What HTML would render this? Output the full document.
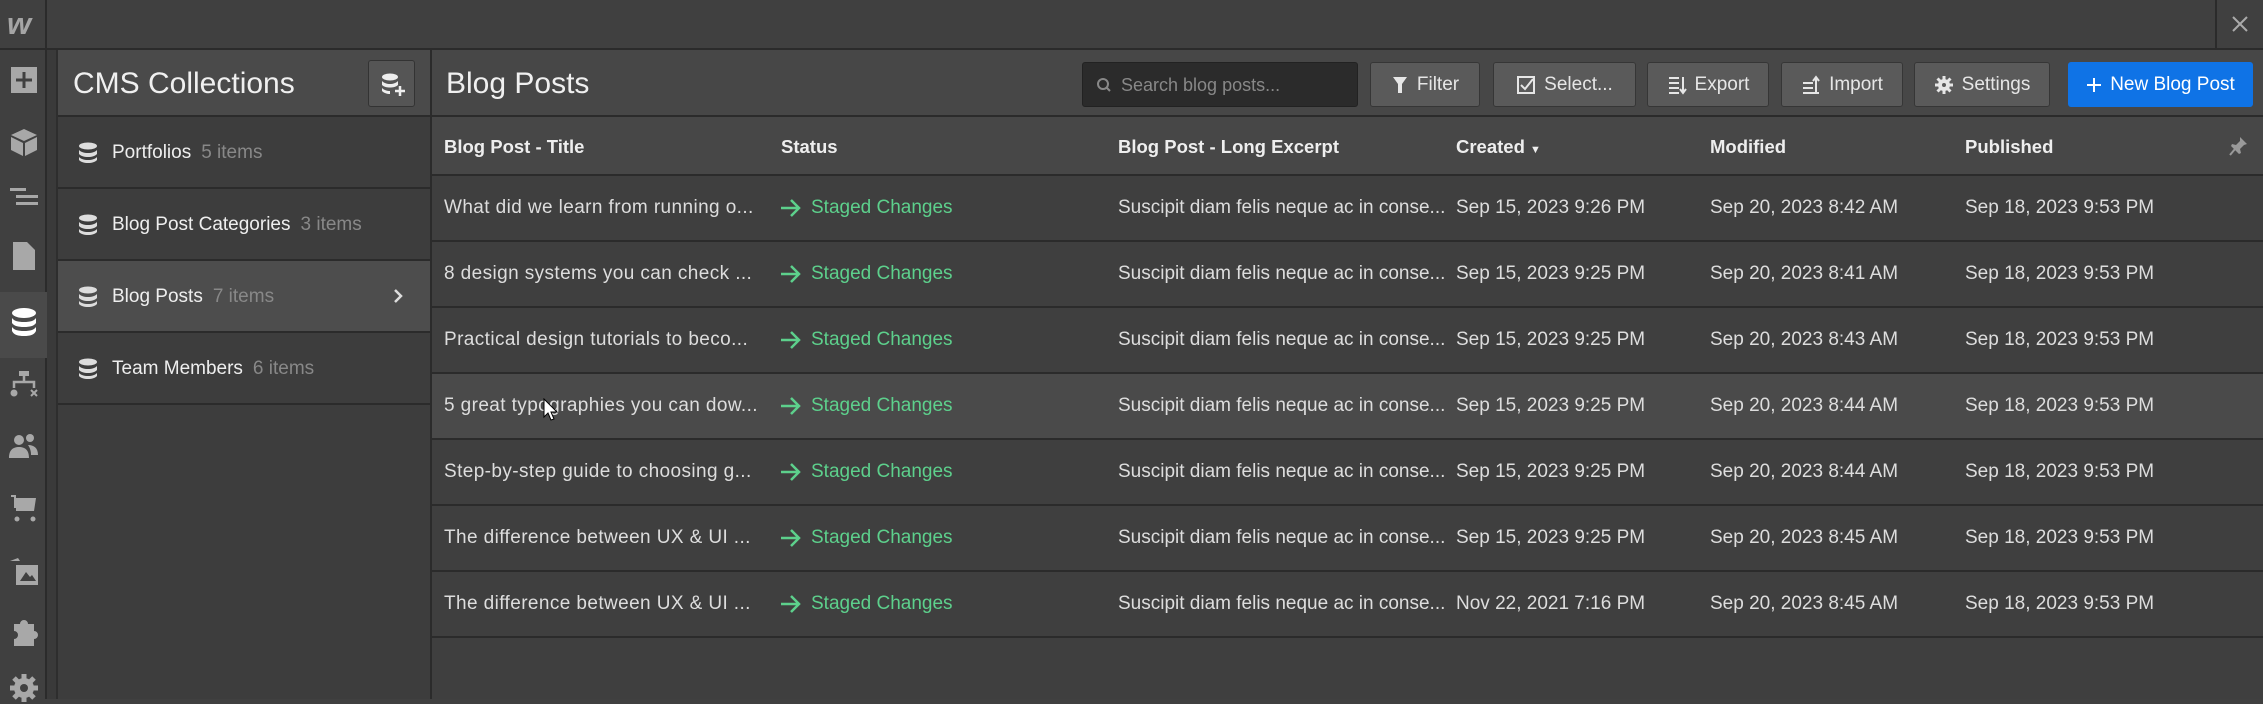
<!DOCTYPE html>
<html><head><meta charset="utf-8"><style>
*{box-sizing:border-box;margin:0;padding:0}
body{width:2263px;height:699px;background:#404040;font-family:"Liberation Sans",sans-serif;color:#e0e0e0;position:relative;overflow:hidden}
.a{position:absolute}
.top{left:0;top:0;width:2263px;height:50px;background:#404040;border-bottom:2px solid #2b2b2b}
.rail{left:0;top:50px;width:47px;height:649px;background:#404040;border-right:2px solid #2b2b2b}
.strip{left:47px;top:50px;width:11px;height:649px;background:#3a3a3a;border-right:2px solid #2e2e2e}
.ic{position:absolute;left:8px;width:32px;height:32px;fill:#a8a8a8}
.cms{left:58px;top:50px;width:374px;height:649px;background:#3d3d3d;border-right:2px solid #2b2b2b}
.cmsh{left:0;top:0;width:372px;height:67px;background:#4a4a4a;border-bottom:2px solid #2b2b2b}
.crow{position:absolute;left:0;width:372px;height:72px;border-bottom:2px solid #2b2b2b;font-size:19px;color:#eee}
.crow span.c{color:#888;margin-left:10px}
.crow .t{position:absolute;left:54px;top:25px}
.crow svg{position:absolute;left:20px;top:25px}
.main{left:432px;top:50px;width:1831px;height:649px;background:#3f3f3f}
.tb{left:0;top:0;width:1831px;height:67px;background:#474747;border-bottom:2px solid #2b2b2b}
.btn{position:absolute;top:12px;height:45px;background:#5a5a5a;border:1px solid #363636;border-radius:3px;font-size:19px;color:#e6e6e6;display:flex;align-items:center;justify-content:center;gap:8px}
.btn svg{fill:none;stroke:#e6e6e6;stroke-width:2}
.hd{left:0;top:67px;width:1831px;height:59px;background:#474747;border-bottom:2px solid #2b2b2b;font-size:18.5px;font-weight:bold;color:#eee}
.hd div,.r div{position:absolute}
.r{position:absolute;left:0;width:1831px;height:66px;border-bottom:2px solid #2b2b2b;font-size:19px;color:#ddd}
.r div{top:21px}
.r div.ti{letter-spacing:0.4px}
.g{color:#5dd08c;padding-left:30px}
.g:before{content:"";position:absolute;left:0;top:2px;width:22px;height:20px;background:no-repeat}
.ar{position:absolute;left:-1px;top:1px}
</style></head><body>
<div class="a top"></div>
<div class="a" style="left:0;top:0;width:47px;height:48px;border-right:2px solid #2b2b2b"></div>
<div class="a" style="left:7px;top:6px;font-size:31px;font-weight:bold;font-style:italic;color:#a5a5a5">w</div>
<div class="a" style="left:2215px;top:0;width:2px;height:48px;background:#2b2b2b"></div>
<svg class="a" style="left:2230px;top:14px" width="20" height="20"><path d="M3 3L17 17M17 3L3 17" stroke="#aaa" stroke-width="2"/></svg>

<div class="a rail">
<svg class="ic" style="top:14px" viewBox="0 0 32 32"><rect x="3" y="3" width="26" height="26"/><path d="M16 8v16M8 16h16" stroke="#404040" stroke-width="3"/></svg>
<svg class="ic" style="top:76px" viewBox="0 0 32 32"><path d="M16 3L29 9 16 15 3 9z M3 11l12 6v13L3 24z M17 17l12-6v13l-12 6z"/></svg>
<svg class="ic" style="top:132px" viewBox="0 0 32 32"><rect x="2" y="6" width="16" height="3"/><rect x="8" y="13" width="22" height="3"/><rect x="8" y="20" width="22" height="3"/></svg>
<svg class="ic" style="top:190px" viewBox="0 0 32 32"><path d="M5 2h14l8 8v20H5z"/></svg>
<div class="a" style="left:0;top:242px;width:47px;height:66px;background:#4a4a4a"></div>
<svg class="ic" style="top:256px;fill:#fff" viewBox="0 0 32 32"><ellipse cx="16" cy="7" rx="12" ry="5"/><path d="M4 12c2 3 6 4 12 4s10-1 12-4v5c-2 3-6 4-12 4S6 20 4 17z M4 21c2 3 6 4 12 4s10-1 12-4v4c-2 4-6 5-12 5S6 29 4 25z"/></svg>
<svg class="ic" style="top:318px" viewBox="0 0 32 32"><rect x="11" y="3" width="10" height="5"/><path d="M16 8v5M6 20v-6h20v6" stroke="#a8a8a8" stroke-width="2.5" fill="none"/><circle cx="6" cy="25" r="3.5"/><path d="M23 22l6 6M29 22l-6 6" stroke="#a8a8a8" stroke-width="2"/></svg>
<svg class="ic" style="top:380px" viewBox="0 0 32 32"><circle cx="11" cy="10" r="5"/><circle cx="22" cy="8" r="4"/><path d="M1 28c0-8 4-11 10-11s10 3 10 11z M20 15c6 0 10 3 10 10h-7c0-4-1-7-3-10z"/></svg>
<svg class="ic" style="top:442px" viewBox="0 0 32 32"><path d="M3 3h5v3h20l-2 13H8v-3H6V5H3z"/><circle cx="9" cy="27" r="2.5"/><circle cx="25" cy="27" r="2.5"/></svg>
<svg class="ic" style="top:505px" viewBox="0 0 32 32"><path d="M2 6l8-3 2 3z M8 10h22v20H8z"/><path d="M12 26l6-9 4 5 2-2 4 6z" fill="#404040"/></svg>
<svg class="ic" style="top:566px" viewBox="0 0 32 32"><path d="M6 8h6a4 4 0 118 0h6v7a4 4 0 110 8v7H6v-7a4 4 0 100-8z"/></svg>
<svg class="ic" style="top:622px" viewBox="0 0 32 32"><circle cx="16" cy="16" r="10"/><path d="M16 2v28M2 16h28M6 6l20 20M26 6L6 26" stroke="#a8a8a8" stroke-width="5"/><circle cx="16" cy="16" r="4" fill="#404040"/></svg>
</div>
<div class="a strip"></div>

<div class="a cms">
<div class="a cmsh"><div class="a" style="left:15px;top:17px;font-size:30px;color:#f0f0f0">CMS Collections</div>
<div class="a" style="left:310px;top:10px;width:47px;height:47px;background:#555;border:1px solid #333;border-radius:3px"><svg style="position:absolute;left:11px;top:11px" width="26" height="26" viewBox="0 0 26 26" fill="#eee"><ellipse cx="10" cy="5" rx="8" ry="3.5"/><path d="M2 9c2 2 5 3 8 3s6-1 8-3v4c-2 2-5 2.5-8 2.5S4 15 2 13zM2 16c2 2 5 3 8 3v3c-3 0-6-1-8-3z"/><path d="M20 14v10M15 19h10" stroke="#eee" stroke-width="2.5"/></svg></div></div>
<div class="crow" style="top:67px;height:72px"><svg width="20" height="22" viewBox="0 0 20 22" fill="#ddd"><ellipse cx="10" cy="4" rx="9" ry="3.5"/><path d="M1 8c2 2 5 3 9 3s7-1 9-3v4c-2 2-5 3-9 3s-7-1-9-3zM1 15c2 2 5 3 9 3s7-1 9-3v3c-2 2-5 3-9 3s-7-1-9-3z"/></svg><div class="t">Portfolios<span class="c">5 items</span></div></div>
<div class="crow" style="top:139px"><svg width="20" height="22" viewBox="0 0 20 22" fill="#ddd"><ellipse cx="10" cy="4" rx="9" ry="3.5"/><path d="M1 8c2 2 5 3 9 3s7-1 9-3v4c-2 2-5 3-9 3s-7-1-9-3zM1 15c2 2 5 3 9 3s7-1 9-3v3c-2 2-5 3-9 3s-7-1-9-3z"/></svg><div class="t">Blog Post Categories<span class="c">3 items</span></div></div>
<div class="crow" style="top:211px;background:#4d4d4d"><svg width="20" height="22" viewBox="0 0 20 22" fill="#ddd"><ellipse cx="10" cy="4" rx="9" ry="3.5"/><path d="M1 8c2 2 5 3 9 3s7-1 9-3v4c-2 2-5 3-9 3s-7-1-9-3zM1 15c2 2 5 3 9 3s7-1 9-3v3c-2 2-5 3-9 3s-7-1-9-3z"/></svg><div class="t">Blog Posts<span class="c">7 items</span></div><svg style="left:335px;top:27px" width="10" height="16"><path d="M2 2l6 6-6 6" stroke="#ddd" stroke-width="2.5" fill="none"/></svg></div>
<div class="crow" style="top:283px"><svg width="20" height="22" viewBox="0 0 20 22" fill="#ddd"><ellipse cx="10" cy="4" rx="9" ry="3.5"/><path d="M1 8c2 2 5 3 9 3s7-1 9-3v4c-2 2-5 3-9 3s-7-1-9-3zM1 15c2 2 5 3 9 3s7-1 9-3v3c-2 2-5 3-9 3s-7-1-9-3z"/></svg><div class="t">Team Members<span class="c">6 items</span></div></div>
</div>

<div class="a main">
<div class="a tb">
<div class="a" style="left:14px;top:17px;font-size:30px;color:#f0f0f0">Blog Posts</div>
<div class="a" style="left:650px;top:12px;width:276px;height:45px;background:#2b2b2b;border:1px solid #222;border-radius:3px;font-size:18px;color:#888;padding:12px 0 0 38px">Search blog posts...<svg style="position:absolute;left:13px;top:14px" width="16" height="16"><circle cx="7" cy="7" r="5" stroke="#888" stroke-width="2" fill="none"/><path d="M10 10l4 4" stroke="#888" stroke-width="2"/></svg></div>
<div class="btn" style="left:938px;width:110px"><svg width="18" height="20"><path d="M2 2h14l-5 7v9h-4v-9z" fill="#e6e6e6" stroke="none"/></svg>Filter</div>
<div class="btn" style="left:1061px;width:143px"><svg width="20" height="20"><rect x="2" y="2" width="16" height="16"/><path d="M5 10l4 4 8-10"/></svg>Select...</div>
<div class="btn" style="left:1215px;width:122px"><svg width="20" height="20"><path d="M2 3h10M2 8h10M2 13h10M2 18h10M16 2v15M13 14l3 4 3-4"/></svg>Export</div>
<div class="btn" style="left:1349px;width:122px"><svg width="20" height="20"><path d="M2 8h10M2 13h10M2 18h16M15 17V3M12 6l3-4 3 4"/></svg>Import</div>
<div class="btn" style="left:1482px;width:136px"><svg width="20" height="20"><circle cx="10" cy="10" r="5" fill="#e6e6e6"/><path d="M10 1v18M1 10h18M3.5 3.5l13 13M16.5 3.5l-13 13" stroke-width="3"/><circle cx="10" cy="10" r="2" fill="#5a5a5a" stroke="none"/></svg>Settings</div>
<div class="btn" style="left:1636px;width:185px;background:#0f73e6;border-color:#0f73e6;color:#fff"><svg width="16" height="16"><path d="M8 1v14M1 8h14" stroke="#fff"/></svg>New Blog Post</div>
</div>
<div class="a hd">
<div style="left:12px;top:19px">Blog Post - Title</div>
<div style="left:349px;top:19px">Status</div>
<div style="left:686px;top:19px">Blog Post - Long Excerpt</div>
<div style="left:1024px;top:19px">Created <span style="font-size:11px">▼</span></div>
<div style="left:1278px;top:19px">Modified</div>
<div style="left:1533px;top:19px">Published</div>
<svg style="position:absolute;left:1797px;top:18px" width="20" height="22"><path d="M11 2l7 7-3 1-4 4 1 4-2 1-8-8 1-2 4 1 4-4z" fill="#999"/><path d="M6 14l-5 6" stroke="#999" stroke-width="2"/></svg>
</div>
<div class="r" style="top:126px"><div class="ti" style="left:12px">What did we learn from running o...</div><div class="g" style="left:349px"><svg class="ar" width="22" height="20"><path d="M1 10h18M11 2l8 8-8 8" stroke="#5dd08c" stroke-width="2.5" fill="none"/></svg>Staged Changes</div><div style="left:686px">Suscipit diam felis neque ac in conse...</div><div style="left:1024px">Sep 15, 2023 9:26 PM</div><div style="left:1278px">Sep 20, 2023 8:42 AM</div><div style="left:1533px">Sep 18, 2023 9:53 PM</div></div>
<div class="r" style="top:192px"><div class="ti" style="left:12px">8 design systems you can check ...</div><div class="g" style="left:349px"><svg class="ar" width="22" height="20"><path d="M1 10h18M11 2l8 8-8 8" stroke="#5dd08c" stroke-width="2.5" fill="none"/></svg>Staged Changes</div><div style="left:686px">Suscipit diam felis neque ac in conse...</div><div style="left:1024px">Sep 15, 2023 9:25 PM</div><div style="left:1278px">Sep 20, 2023 8:41 AM</div><div style="left:1533px">Sep 18, 2023 9:53 PM</div></div>
<div class="r" style="top:258px"><div class="ti" style="left:12px">Practical design tutorials to beco...</div><div class="g" style="left:349px"><svg class="ar" width="22" height="20"><path d="M1 10h18M11 2l8 8-8 8" stroke="#5dd08c" stroke-width="2.5" fill="none"/></svg>Staged Changes</div><div style="left:686px">Suscipit diam felis neque ac in conse...</div><div style="left:1024px">Sep 15, 2023 9:25 PM</div><div style="left:1278px">Sep 20, 2023 8:43 AM</div><div style="left:1533px">Sep 18, 2023 9:53 PM</div></div>
<div class="r" style="top:324px;background:#4a4a4a"><div class="ti" style="left:12px">5 great typographies you can dow...</div><div class="g" style="left:349px"><svg class="ar" width="22" height="20"><path d="M1 10h18M11 2l8 8-8 8" stroke="#5dd08c" stroke-width="2.5" fill="none"/></svg>Staged Changes</div><div style="left:686px">Suscipit diam felis neque ac in conse...</div><div style="left:1024px">Sep 15, 2023 9:25 PM</div><div style="left:1278px">Sep 20, 2023 8:44 AM</div><div style="left:1533px">Sep 18, 2023 9:53 PM</div></div>
<div class="r" style="top:390px"><div class="ti" style="left:12px">Step-by-step guide to choosing g...</div><div class="g" style="left:349px"><svg class="ar" width="22" height="20"><path d="M1 10h18M11 2l8 8-8 8" stroke="#5dd08c" stroke-width="2.5" fill="none"/></svg>Staged Changes</div><div style="left:686px">Suscipit diam felis neque ac in conse...</div><div style="left:1024px">Sep 15, 2023 9:25 PM</div><div style="left:1278px">Sep 20, 2023 8:44 AM</div><div style="left:1533px">Sep 18, 2023 9:53 PM</div></div>
<div class="r" style="top:456px"><div class="ti" style="left:12px">The difference between UX &amp; UI ...</div><div class="g" style="left:349px"><svg class="ar" width="22" height="20"><path d="M1 10h18M11 2l8 8-8 8" stroke="#5dd08c" stroke-width="2.5" fill="none"/></svg>Staged Changes</div><div style="left:686px">Suscipit diam felis neque ac in conse...</div><div style="left:1024px">Sep 15, 2023 9:25 PM</div><div style="left:1278px">Sep 20, 2023 8:45 AM</div><div style="left:1533px">Sep 18, 2023 9:53 PM</div></div>
<div class="r" style="top:522px"><div class="ti" style="left:12px">The difference between UX &amp; UI ...</div><div class="g" style="left:349px"><svg class="ar" width="22" height="20"><path d="M1 10h18M11 2l8 8-8 8" stroke="#5dd08c" stroke-width="2.5" fill="none"/></svg>Staged Changes</div><div style="left:686px">Suscipit diam felis neque ac in conse...</div><div style="left:1024px">Nov 22, 2021 7:16 PM</div><div style="left:1278px">Sep 20, 2023 8:45 AM</div><div style="left:1533px">Sep 18, 2023 9:53 PM</div></div>
</div>
<svg class="a" style="left:543px;top:398px" width="16" height="24"><path d="M1 1v18l4-4 3 7 3-1-3-7h6z" fill="#fff" stroke="#000"/></svg>
</body></html>
